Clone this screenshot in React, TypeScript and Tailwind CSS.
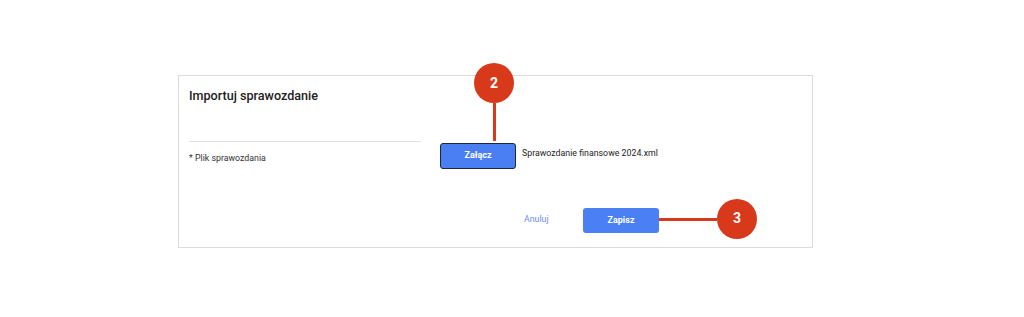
import React from 'react';

function Badge({ n, className }: { n: string; className: string }) {
    return (
        <div className={`absolute w-[40px] h-[40px] rounded-full bg-[#d8391b] text-white font-bold text-[14px] flex items-center justify-center ${className}`}>
            {n}
        </div>
    );
}

export default function App() {
    return (
        <div className="w-[1024px] h-[317px] bg-white pt-[75px] font-['Roboto',_'Liberation_Sans',_sans-serif]">
            <div className="ml-[178px] w-[635px] h-[173px] border border-[#dcdcdc] pl-[10px] pt-[10px]">

                {/* Title */}
                <div className="text-[12.6px] leading-[20px] font-medium text-[#222]">Importuj sprawozdanie</div>

                {/* File row */}
                <div className="flex flex-row items-start mt-[35px]">
                    <div className="w-[232px] border-t border-[#e2e2e2] pt-[9px] text-[8.8px] leading-[14px] text-[#333]">
                        * Plik sprawozdania
                    </div>
                    <div className="relative ml-[19px]">
                        <button className="w-[76px] h-[26px] rounded-[3px] bg-[#4a7ff3] border-[1.5px] border-[#1d2738] text-white text-[9px] font-bold">
                            Załącz
                        </button>
                        <div className="absolute left-[53px] top-[-38px] w-[3px] h-[38px] bg-[#d8391b]" />
                        <Badge n="2" className="left-[34px] top-[-78px]" />
                    </div>
                    <div className="ml-[6px] h-[26px] flex items-center text-[8.8px] text-[#222]">
                        Sprawozdanie finansowe 2024.xml
                    </div>
                </div>

                {/* Footer */}
                <div className="flex flex-row items-center mt-[37px] ml-[335px]">
                    <span className="w-[24px] text-[8.8px] text-[#6b8ef2]">Anuluj</span>
                    <div className="relative ml-[35px]">
                        <button className="w-[76px] h-[25px] rounded-[3px] bg-[#4b80f5] text-white text-[9px] font-bold">
                            Zapisz
                        </button>
                        <div className="absolute left-[76px] top-[12px] w-[58px] h-[3px] bg-[#d8391b]" />
                        <Badge n="3" className="left-[134px] top-[-7px]" />
                    </div>
                </div>
            </div>
        </div>
    );
}
